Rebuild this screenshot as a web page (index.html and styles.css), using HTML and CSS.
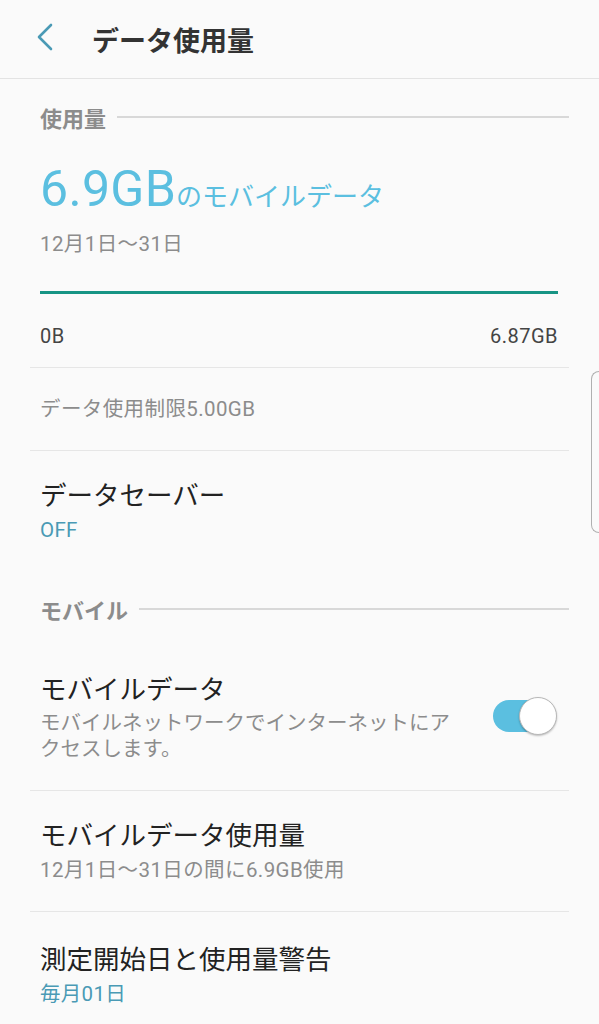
FILE: index.html
```html
<!DOCTYPE html>
<html lang="ja">

<head>
    <meta charset="UTF-8">
    <meta name="viewport" content="width=device-width, initial-scale=1.0">
    <title>データ使用量</title>
    <link rel="stylesheet" href="styles.css">
</head>

<body>

    <header class="appbar">
        <button class="back" aria-label="戻る">
            <svg width="18" height="28" viewBox="0 0 18 28">
                <path d="M15 2 L3 14 L15 26" fill="none" stroke="#4a9ab5" stroke-width="2.6" stroke-linecap="round" stroke-linejoin="round" />
            </svg>
        </button>
        <h1>データ使用量</h1>
    </header>

    <main class="content">

        <div class="section-head">
            <span>使用量</span>
        </div>

        <div class="usage">
            <div class="usage-total"><span class="amount">6.9GB</span><span class="unit">のモバイルデータ</span></div>
            <div class="usage-period">12月1日～31日</div>
            <div class="bar"><div class="bar-fill" style="width: 100%"></div></div>
            <div class="bar-scale">
                <span>0B</span>
                <span>6.87GB</span>
            </div>
        </div>

        <div class="item item-plain">
            <div class="item-sub">データ使用制限5.00GB</div>
        </div>

        <div class="item no-border">
            <div class="item-title">データセーバー</div>
            <div class="item-value">OFF</div>
        </div>

        <div class="section-head">
            <span>モバイル</span>
        </div>

        <div class="item item-switch">
            <div class="item-text">
                <div class="item-title">モバイルデータ</div>
                <div class="item-desc">モバイルネットワークでインターネットにアクセスします。</div>
            </div>
            <div class="switch on"><div class="knob"></div></div>
        </div>

        <div class="item">
            <div class="item-title">モバイルデータ使用量</div>
            <div class="item-sub">12月1日～31日の間に6.9GB使用</div>
        </div>

        <div class="item no-border last">
            <div class="item-title">測定開始日と使用量警告</div>
            <div class="item-value">毎月01日</div>
        </div>

    </main>

    <div class="edge-handle"></div>

</body>

</html>
```

FILE: styles.css
```css
body {
    margin: 0;
    background: #fafafa;
    font-family: Roboto, "Noto Sans CJK JP", sans-serif;
    color: #222;
    overflow: hidden;
}

.appbar {
    height: 78px;
    display: flex;
    align-items: center;
    border-bottom: 1px solid #e3e3e3;
}

.back {
    background: none;
    border: none;
    padding: 0;
    margin-left: 36px;
    margin-top: -4px;
    width: 18px;
    height: 28px;
}

h1 {
    margin: 0 0 0 38px;
    font-size: 27px;
    font-weight: bold;
    color: #333;
}

.content {
    margin: 0 30px;
}

.section-head {
    height: 76px;
    display: flex;
    align-items: center;
    padding-left: 10px;
    gap: 11px;
    font-size: 22px;
    font-weight: bold;
    color: #8c8c8c;
}

.section-head::after {
    content: "";
    flex: 1;
    height: 2px;
    background: #d8d8d8;
}

.usage {
    padding: 0 11px 0 10px;
    border-bottom: 1px solid #e6e6e6;
}

.usage-total {
    margin-top: 6px;
    line-height: 56px;
    color: #5bbfe0;
}

.amount {
    font-size: 50px;
    letter-spacing: 0.3px;
}

.unit {
    font-size: 26px;
}

.usage-period {
    margin-top: 0;
    font-size: 20.5px;
    line-height: 30px;
    letter-spacing: 0.4px;
    color: #8c8c8c;
}

.bar {
    margin-top: 32px;
    height: 3px;
    background: #e0e0e0;
}

.bar-fill {
    height: 100%;
    background: #179484;
}

.bar-scale {
    display: flex;
    justify-content: space-between;
    margin-top: 27px;
    padding-bottom: 16px;
    font-size: 20px;
    line-height: 30px;
    letter-spacing: 0.5px;
    color: #444;
}

.item {
    padding: 28px 11px 24px 10px;
    border-bottom: 1px solid #e6e6e6;
}

.item.no-border {
    border-bottom: none;
}

.item.last {
    padding-top: 31px;
}

.item-plain {
    height: 83px;
    padding-top: 0;
    padding-bottom: 0;
    display: flex;
    align-items: center;
    box-sizing: border-box;
}

.item-title {
    font-size: 26.5px;
    line-height: 34px;
    color: #222;
}

.item-sub {
    font-size: 20.5px;
    line-height: 34px;
    letter-spacing: 0.4px;
    color: #8c8c8c;
}

.item-value {
    font-size: 20.5px;
    line-height: 34px;
    letter-spacing: 0.3px;
    color: #4a9ab5;
}

.item-switch {
    display: flex;
    align-items: center;
    gap: 24px;
    padding-top: 26px;
    padding-bottom: 28px;
}

.item-text {
    flex: 1;
}

.item-desc {
    margin-top: 3px;
    font-size: 20.5px;
    line-height: 26px;
    color: #8c8c8c;
}

.switch {
    position: relative;
    width: 62px;
    height: 32px;
    margin-right: 3px;
    margin-top: -3px;
    border-radius: 16px;
    background: #5bbfe0;
}

.knob {
    position: absolute;
    top: -3px;
    right: -2px;
    width: 36px;
    height: 36px;
    border-radius: 50%;
    background: #fff;
    border: 1px solid #b8b8b8;
    box-shadow: 0 1px 2px rgba(0, 0, 0, 0.25);
}

.edge-handle {
    position: absolute;
    top: 371px;
    right: 0;
    width: 7px;
    height: 160px;
    border: 1.5px solid #b0b0b0;
    border-right: none;
    border-radius: 8px 0 0 8px;
}
```
